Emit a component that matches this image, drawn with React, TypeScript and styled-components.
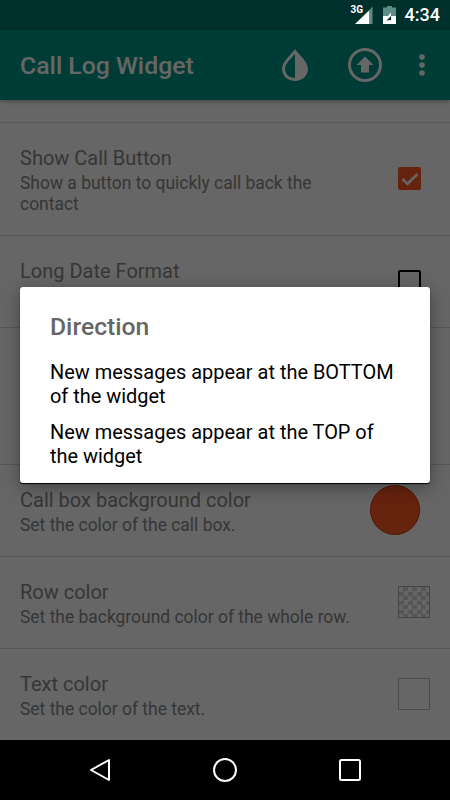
import styled, { createGlobalStyle } from 'styled-components';

const GlobalStyle = createGlobalStyle`
  html, body {
    margin: 0;
    padding: 0;
    background: #000;
  }
  * {
    box-sizing: border-box;
  }
`;

const Screen = styled.div`
  width: 450px;
  height: 800px;
  display: flex;
  flex-direction: column;
  overflow: hidden;
  font-family: Roboto, 'Liberation Sans', sans-serif;
`;

const StatusBar = styled.div`
  height: 30px;
  flex-shrink: 0;
  display: flex;
  align-items: center;
  justify-content: flex-end;
  padding-right: 10px;
  background: #00302b;
  color: #fff;
`;

const NetworkIcon = styled.div`
  position: relative;
  width: 22px;
  height: 20px;
  margin-right: 10px;
  svg {
    display: block;
  }
`;

const NetworkLabel = styled.span`
  position: absolute;
  top: -1px;
  left: 0;
  font-size: 10px;
  line-height: 11px;
  font-weight: 700;
`;

const Clock = styled.span`
  margin-left: 9px;
  font-size: 18px;
  line-height: 24px;
  font-weight: 500;
`;

const Body = styled.div`
  position: relative;
  flex: 1;
  min-height: 0;
  display: flex;
  flex-direction: column;
  background: #fff;
`;

const AppBar = styled.header`
  position: relative;
  z-index: 1;
  height: 70px;
  flex-shrink: 0;
  display: flex;
  align-items: center;
  padding-left: 20px;
  background: #009688;
  box-shadow: 0 2px 4px rgba(0, 0, 0, 0.25);
`;

const AppTitle = styled.h1`
  flex: 1;
  margin: 2px 0 0;
  font-size: 24.8px;
  line-height: 32px;
  font-weight: 500;
  color: #fff;
`;

const ActionIcon = styled.svg`
  display: block;
  fill: #fff;
`;

const DropAction = styled(ActionIcon)`
  margin-right: 39px;
`;

const UploadAction = styled(ActionIcon)`
  margin-right: 37px;
`;

const MenuAction = styled(ActionIcon)`
  margin-right: 25px;
`;

const SettingsList = styled.div`
  flex: 1;
  min-height: 0;
  overflow: hidden;
`;

const TopSpacer = styled.div`
  height: 23px;
  border-bottom: 1px solid #ddd;
`;

const Row = styled.div<{ $minHeight?: number }>`
  min-height: ${(p) => (p.$minHeight ? `${p.$minHeight}px` : '0')};
  display: flex;
  align-items: center;
  justify-content: space-between;
  padding: 22px 20px 20px;
  border-bottom: 1px solid #ddd;
`;

const RowText = styled.div`
  max-width: 340px;
  align-self: flex-start;
`;

const RowTitle = styled.div`
  font-size: 20px;
  line-height: 26px;
  color: #888;
`;

const RowSummary = styled.div`
  margin-top: 2px;
  font-size: 17.45px;
  line-height: 21px;
  color: #888;
`;

const CheckBox = styled.div<{ $checked?: boolean }>`
  width: 23px;
  height: 23px;
  margin: 0 9px 3px 0;
  display: flex;
  align-items: center;
  justify-content: center;
  border-radius: 2px;
  background: ${(p) => (p.$checked ? '#ff5722' : 'transparent')};
  border: ${(p) => (p.$checked ? 'none' : '2px solid #000')};
`;

const ColorCircle = styled.div`
  width: 50px;
  height: 50px;
  margin: -11px 10px -8px 0;
  flex-shrink: 0;
  border-radius: 50%;
  background: #ff5722;
  border: 1px solid #c9340a;
`;

const TransparentSwatch = styled.div`
  width: 32px;
  height: 32px;
  margin-bottom: 3px;
  border: 1px solid #aaa;
  background-color: #fff;
  background-image: conic-gradient(#d6d6d6 25%, #fff 0 50%, #d6d6d6 0 75%, #fff 0);
  background-size: 9px 9px;
`;

const WhiteSwatch = styled.div`
  width: 32px;
  height: 32px;
  margin-bottom: 3px;
  border: 1px solid #bbb;
  background: #fff;
`;

const Scrim = styled.div`
  position: absolute;
  inset: 0;
  z-index: 2;
  display: flex;
  align-items: center;
  justify-content: center;
  background: rgba(0, 0, 0, 0.6);
`;

const Dialog = styled.div`
  width: 410px;
  height: 196px;
  padding: 24px 30px 0;
  border-radius: 3px;
  background: #fff;
  box-shadow: 0 1px 1px #000, 0 4px 18px rgba(0, 0, 0, 0.35);
`;

const DialogTitle = styled.h2`
  margin: 0 0 17px;
  font-size: 24.7px;
  line-height: 32px;
  font-weight: 500;
  color: #666;
`;

const DialogOption = styled.div`
  margin-bottom: 12px;
  font-size: 19.95px;
  line-height: 24px;
  color: #000;
`;

const NavBar = styled.nav`
  height: 60px;
  flex-shrink: 0;
  display: flex;
  align-items: center;
  justify-content: center;
  gap: 99px;
  background: #000;
  svg {
    display: block;
    fill: none;
    stroke: #fff;
    stroke-width: 2;
  }
`;

const App = () => {
  return (
    <Screen>
      <GlobalStyle />
      <StatusBar>
        <NetworkIcon>
          <svg width="22" height="20" viewBox="0 0 22 20">
            <path d="M4 19 L18.5 5 V19 Z" fill="#fff" />
            <path d="M18.5 5 L21.5 1.5 V19 H18.5 Z" fill="#5d8b86" />
          </svg>
          <NetworkLabel>3G</NetworkLabel>
        </NetworkIcon>
        <svg width="13" height="18" viewBox="0 0 13 18">
          <path d="M4 0 H9 V1.5 H13 V18 H0 V1.5 H4 Z" fill="#5d8b86" />
          <path d="M0 10 H5 L8 6.5 V10 H13 V18 H0 Z" fill="#fff" />
          <path d="M3.5 14.5 L8 10 V14 Z" fill="#00302b" />
        </svg>
        <Clock>4:34</Clock>
      </StatusBar>
      <Body>
        <AppBar>
          <AppTitle>Call Log Widget</AppTitle>
          <DropAction width="28" height="34" viewBox="0 0 28 34">
            <path
              fillRule="evenodd"
              d="M14 1 C17 6 27 13 27 21 C27 28 21 33 14 33 C7 33 1 28 1 21 C1 13 11 6 14 1 Z M14 6 C11 10 4 15 4 21 C4 26 8.5 30 14 30 Z"
            />
          </DropAction>
          <UploadAction width="34" height="34" viewBox="0 0 34 34">
            <circle cx="17" cy="17" r="15.5" fill="none" stroke="#fff" strokeWidth="3" />
            <path d="M17 8.5 L25.5 17 H21 V24.5 H13 V17 H8.5 Z" />
          </UploadAction>
          <MenuAction width="6" height="22" viewBox="0 0 6 22">
            <circle cx="3" cy="3" r="2.8" />
            <circle cx="3" cy="11" r="2.8" />
            <circle cx="3" cy="19" r="2.8" />
          </MenuAction>
        </AppBar>
        <SettingsList>
          <TopSpacer />
          <Row>
            <RowText>
              <RowTitle>Show Call Button</RowTitle>
              <RowSummary>Show a button to quickly call back the contact</RowSummary>
            </RowText>
            <CheckBox $checked>
              <svg width="18" height="14" viewBox="0 0 18 14">
                <path d="M1.5 7 L6.5 12 L16.5 2" fill="none" stroke="#fff" strokeWidth="2.6" />
              </svg>
            </CheckBox>
          </Row>
          <Row $minHeight={92}>
            <RowText>
              <RowTitle>Long Date Format</RowTitle>
            </RowText>
            <CheckBox />
          </Row>
          <Row $minHeight={137} />
          <Row>
            <RowText>
              <RowTitle>Call box background color</RowTitle>
              <RowSummary>Set the color of the call box.</RowSummary>
            </RowText>
            <ColorCircle />
          </Row>
          <Row>
            <RowText>
              <RowTitle>Row color</RowTitle>
              <RowSummary>Set the background color of the whole row.</RowSummary>
            </RowText>
            <TransparentSwatch />
          </Row>
          <Row>
            <RowText>
              <RowTitle>Text color</RowTitle>
              <RowSummary>Set the color of the text.</RowSummary>
            </RowText>
            <WhiteSwatch />
          </Row>
        </SettingsList>
        <Scrim>
          <Dialog>
            <DialogTitle>Direction</DialogTitle>
            <DialogOption>New messages appear at the BOTTOM of the widget</DialogOption>
            <DialogOption>New messages appear at the TOP of the widget</DialogOption>
          </Dialog>
        </Scrim>
      </Body>
      <NavBar>
        <svg width="26" height="26" viewBox="0 0 26 26">
          <path d="M22 3 V23 L4 13 Z" strokeLinejoin="round" />
        </svg>
        <svg width="26" height="26" viewBox="0 0 26 26">
          <circle cx="13" cy="13" r="11" />
        </svg>
        <svg width="26" height="26" viewBox="0 0 26 26">
          <rect x="3" y="3" width="20" height="20" rx="1.5" />
        </svg>
      </NavBar>
    </Screen>
  );
};

export default App;
